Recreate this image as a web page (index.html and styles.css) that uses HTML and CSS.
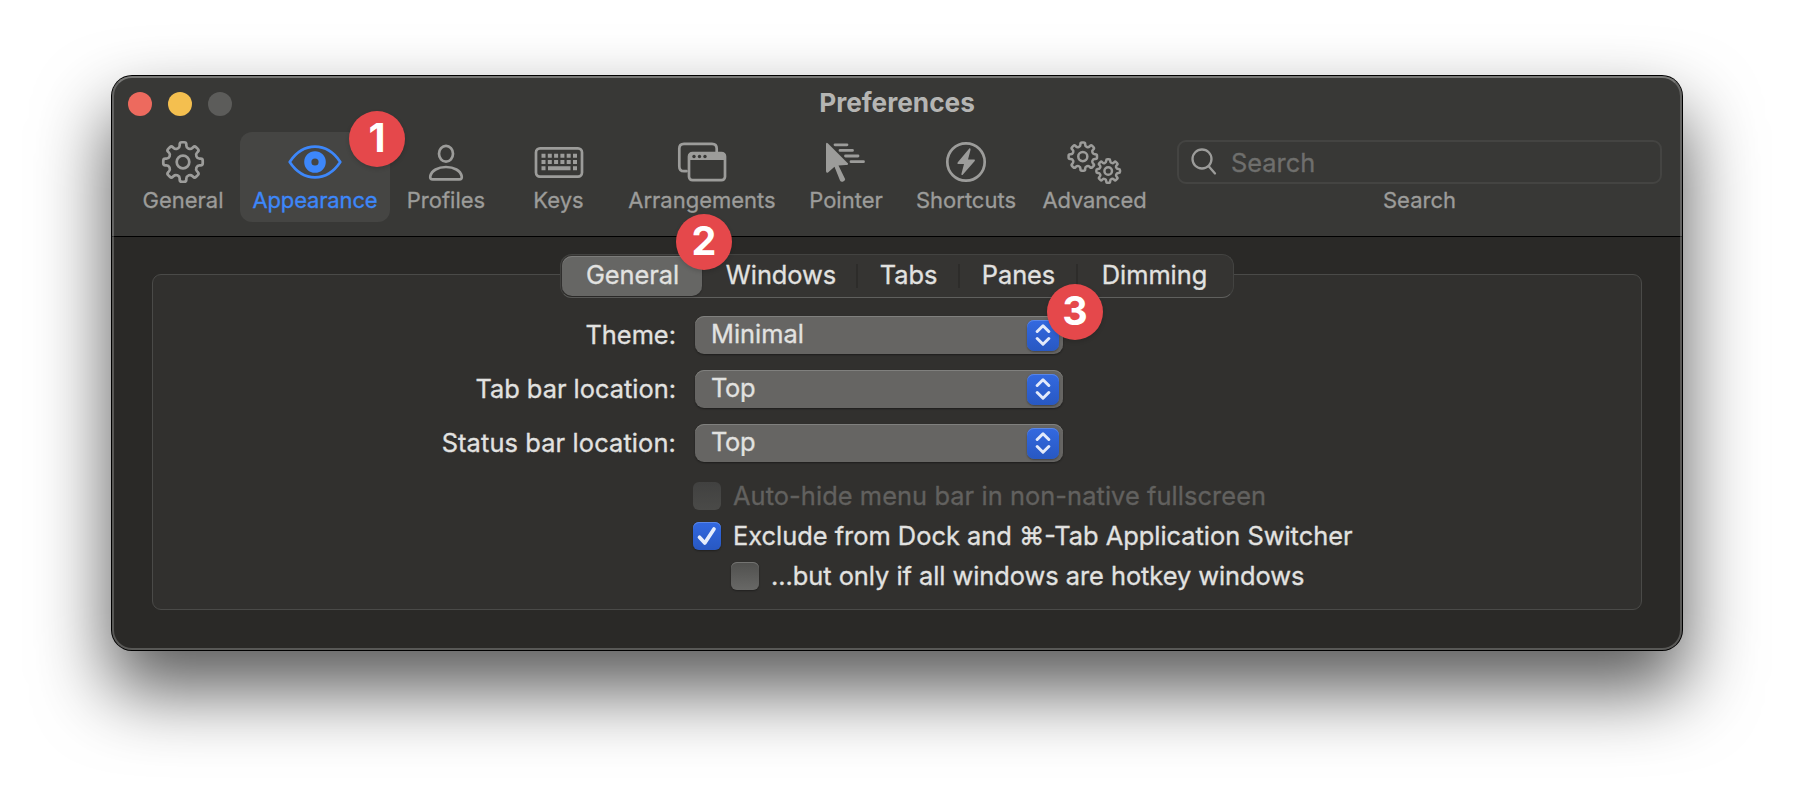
FILE: index.html
```html
<!DOCTYPE html>
<html lang="en">
<head>
<meta charset="utf-8">
<title>Preferences</title>
<link rel="stylesheet" href="styles.css">
</head>
<body>
<main class="window">
  <header class="header">
    <div class="lights"><i class="light red"></i><i class="light yellow"></i><i class="light gray"></i></div>
    <h1 class="title">Preferences</h1>
    <nav class="toolbar">
      <a class="tool w-general"><svg class="icon" width="44" height="44" viewBox="-22 -22 44 44"><use href="#gear-shape"/></svg><span>General</span></a>
      <a class="tool w-appearance active">
        <svg class="icon" width="56" height="44" viewBox="-28 -22 56 44"><path d="M-25.3 0C-19-9.500-10-15.300 0-15.300S19-9.500 25.300 0C19 9.500 10 15.300 0 15.300S-19 9.500-25.300 0Z"/><circle r="7.200" stroke-width="7.200"/></svg>
        <span class="t-appearance">Appearance</span><b class="badge b1">1</b></a>
      <a class="tool w-profiles">
        <svg class="icon" width="44" height="44" viewBox="-22 -22 44 44"><ellipse cx="0" cy="-8.300" rx="7" ry="7.900"/><path d="M-13.300 17.300H13.300Q16.200 17.300 15.700 14.300C14.500 8.500 8 5 0 5S-14.500 8.500-15.700 14.300Q-16.200 17.300-13.300 17.300Z"/></svg>
        <span>Profiles</span></a>
      <a class="tool w-keys">
        <svg class="icon" width="52" height="44" viewBox="-26 -22 52 44"><rect x="-23" y="-13.600" width="46" height="28.200" rx="4"/><path class="keys" d="M-17.500-6.300h35.500M-17.500 0h35.500"/><path class="solid" d="M-17.500 4.300h4v4h-4zM-11 4.300h22.500v4H-11zM14 4.300h4v4h-4z"/></svg>
        <span>Keys</span></a>
      <a class="tool w-arrangements">
        <svg class="icon" width="52" height="44" viewBox="-26 -22 52 44"><path d="M-15.500 9.200h-2.500q-4.700 0-4.700-4.700v-18q0-4.700 4.700-4.700h28q4.700 0 4.700 4.700v3.500"/><rect x="-13" y="-9" width="36" height="27.200" rx="3.500"/><path class="solid" d="M-13.500-2V-6q0-3.500 3.500-3.500h29.500q3.500 0 3.500 3.500v4z"/><g class="dots"><circle cx="-8" cy="-5.500" r="1.700"/><circle cx="-2.500" cy="-5.500" r="1.700"/><circle cx="3" cy="-5.500" r="1.700"/></g></svg>
        <span>Arrangements</span></a>
      <a class="tool w-pointer">
        <svg class="icon" width="44" height="44" viewBox="-22 -22 44 44"><path class="solid" d="M-20-17.500Q-20-20.500-18-18.500L2 1.500Q2.500 3-.500 3L-7.500 3.500-.800 17.200Q-1 19-3.300 19.700-5.200 20-6 18.500L-11.500 4.800-18 10.500Q-20 11.500-20 9Z"/><path class="lines" d="M-11-17.200H1M-6-11.600H6.500M-.500-6H12M5-.300H17.500"/></svg>
        <span>Pointer</span></a>
      <a class="tool w-shortcuts">
        <svg class="icon" width="44" height="44" viewBox="-22 -22 44 44"><circle r="18.700"/><path class="solid" d="M3.500-13.800Q5-14 4.500-12L2-2.500H8.500Q9.500-2 8.500-.700L-3.500 13Q-5 13.500-4.500 11.500L-2 2H-8Q-9.500 1.500-8 0Z"/></svg>
        <span>Shortcuts</span></a>
      <a class="tool w-advanced">
        <svg class="icon" width="56" height="44" viewBox="-28 -22 56 44"><g transform="translate(-12.200 -5.400) scale(.72)" class="thick1"><use href="#gear-shape"/></g><g transform="translate(13.200 9) scale(.6)" class="thick2"><use href="#gear-shape"/></g></svg>
        <span class="t-advanced">Advanced</span></a>
      <div class="search">
        <div class="field"><svg class="glass" width="26" height="28" viewBox="0 0 26 28"><circle cx="11" cy="11" r="9.500"/><path d="M17.700 18.200L24 25.500"/></svg><span>Search</span></div>
        <span>Search</span>
      </div>
    </nav>
  </header>
  <section class="content">
    <div class="panel">
      <nav class="tabs">
        <a class="seg s1 on"><span>General</span><b class="badge b2">2</b></a>
        <a class="seg s2"><span>Windows</span></a>
        <a class="seg s3"><span>Tabs</span></a>
        <a class="seg s4"><span>Panes</span></a>
        <a class="seg s5"><span>Dimming</span></a>
      </nav>
      <div class="form">
        <label class="label">Theme:</label>
        <div class="select"><span>Minimal</span><i class="step"><svg width="16" height="22" viewBox="0 0 16 22"><path d="M2.200 7.500L8 1.800 13.800 7.500M2.200 14.500L8 20.200 13.800 14.500"/></svg></i><b class="badge b3">3</b></div>
        <label class="label">Tab bar location:</label>
        <div class="select"><span class="t-top">Top</span><i class="step"><svg width="16" height="22" viewBox="0 0 16 22"><path d="M2.200 7.500L8 1.800 13.800 7.500M2.200 14.500L8 20.200 13.800 14.500"/></svg></i></div>
        <label class="label t-status">Status bar location:</label>
        <div class="select"><span class="t-top">Top</span><i class="step"><svg width="16" height="22" viewBox="0 0 16 22"><path d="M2.200 7.500L8 1.800 13.800 7.500M2.200 14.500L8 20.200 13.800 14.500"/></svg></i></div>
      </div>
      <div class="checks">
        <label class="check disabled"><i class="box"></i><span class="t-auto">Auto-hide menu bar in non-native fullscreen</span></label>
        <label class="check"><i class="box checked"><svg width="28" height="28" viewBox="0 0 28 28"><path d="M6.500 15.300L11.800 21 21 7"/></svg></i><span>Exclude from Dock and <span class="cmd">⌘</span>-Tab Application Switcher</span></label>
        <label class="check sub"><i class="box"></i><span class="t-only">...but only if all windows are hotkey windows</span></label>
      </div>
    </div>
  </section>
</main>
<svg width="0" height="0" class="defs"><defs><g id="gear-shape"><path id="teeth"/><circle r="6.300"/></g></defs></svg>
<script src="gear.js"></script>
</body>
</html>
```
FILE: gear.js
```js
// Builds the outline of the eight-toothed gear shared by the toolbar icons.
(function () {
  var pts = [], root = 14.8, tip = 20;
  for (var i = 0; i < 8; i++) {
    var c = i * 45 - 90;
    [[-13, root], [-9.5, tip], [9.5, tip], [13, root]].forEach(function (p) {
      var a = (c + p[0]) * Math.PI / 180;
      pts.push([p[1] * Math.cos(a), p[1] * Math.sin(a)]);
    });
  }
  function toward(a, b, d) {
    var l = Math.hypot(b[0] - a[0], b[1] - a[1]);
    return [(a[0] + (b[0] - a[0]) * d / l).toFixed(2), (a[1] + (b[1] - a[1]) * d / l).toFixed(2)];
  }
  var n = pts.length, d = '';
  pts.forEach(function (p, k) {
    var start = toward(p, pts[(k + n - 1) % n], 2.1), end = toward(p, pts[(k + 1) % n], 2.1);
    d += (k ? 'L' : 'M') + start + 'Q' + p[0].toFixed(2) + ',' + p[1].toFixed(2) + ' ' + end;
  });
  document.getElementById('teeth').setAttribute('d', d + 'Z');
})();
```
FILE: styles.css
```css
* { box-sizing: border-box; }
body { margin: 0; width: 1794px; height: 798px; padding: 76px 112px; overflow: hidden; background: #fff; font-family: Inter, "Liberation Sans", sans-serif; font-size: 25.400px; color: #e2e2e0; -webkit-text-stroke: .3px currentColor; }
.defs { position: absolute; }
span { white-space: nowrap; }
.window { position: relative; width: 1570px; height: 574px; border-radius: 20px; background: #2a2927; box-shadow: 0 0 0 1px #000, 0 38px 72px 3px rgba(0,0,0,.64); display: flex; flex-direction: column; }
.window::after { content: ""; position: absolute; inset: 0; border-radius: 20px; border: 2px solid rgba(255,255,255,.22); border-top-color: rgba(255,255,255,.32); pointer-events: none; }
.header { height: 161px; border-bottom: 1px solid #000; background: #383836; border-radius: 20px 20px 0 0; display: grid; grid-template-columns: 1fr auto 1fr; grid-template-rows: 56px 104px; }
.lights { display: flex; gap: 16px; padding: 16px 0 0 16px; }
.light { width: 24px; height: 24px; border-radius: 50%; }
.red { background: #ed6a5e; }
.yellow { background: #f4bf4f; }
.gray { background: #5c5c5a; }
.title { margin: 0; padding-top: 11px; font-size: 26.200px; line-height: 31px; font-weight: 700; color: #b5b5b3; -webkit-text-stroke: 0; }
.toolbar { grid-column: 1 / 4; display: flex; padding-left: 14px; height: 90px; font-size: 22px; color: #9c9c9a; }
.tool { position: relative; height: 90px; display: flex; flex-direction: column; align-items: center; padding-top: 8px; line-height: 27px; border-radius: 12px; }
.tool > span, .search > span { margin-top: 3px; }
.t-appearance, .t-advanced { letter-spacing: -.15px; }
.icon { display: block; fill: none; stroke: currentColor; stroke-width: 2.700; stroke-linejoin: round; stroke-linecap: round; flex: none; }
.icon .solid { fill: currentColor; stroke: none; }
.icon .keys { stroke-width: 4; stroke-linecap: butt; stroke-dasharray: 4 2.300; }
.icon .lines { stroke-width: 2.800; }
.icon .dots { fill: #383836; stroke: none; }
.thick1 { stroke-width: 3.500; }
.thick2 { stroke-width: 4.100; }
.w-general { width: 114px; } .w-appearance { width: 150px; } .w-profiles { width: 112px; } .w-keys { width: 113px; }
.w-arrangements { width: 174px; } .w-pointer { width: 114px; } .w-shortcuts { width: 126px; } .w-advanced { width: 131px; }
.active { background: #454543; color: #3d87fa; }
.search { width: 485px; margin-left: 17px; padding-top: 8px; display: flex; flex-direction: column; align-items: center; line-height: 27px; }
.field { width: 485px; height: 44px; border: 2px solid #444442; border-radius: 9px; display: flex; align-items: center; padding-left: 12px; gap: 14px; font-size: 25.400px; color: #6f6f6d; }
.glass { fill: none; stroke: #9c9c9a; stroke-width: 2.300; stroke-linecap: round; }
.badge { position: absolute; z-index: 3; width: 56px; height: 56px; border-radius: 50%; background: #e5484b; color: #fff; text-align: center; font: 700 39.500px/54px Inter, sans-serif; letter-spacing: 0; -webkit-text-stroke: 0; box-shadow: 0 2px 4px rgba(0,0,0,.15); }
.b1 { left: 109px; top: -21px; }
.b2 { left: 114px; top: -42px; }
.b3 { left: 352px; top: -32px; }
.content { padding: 37px 40px 0; }
.panel { height: 336px; border: 1px solid #4a4a48; border-radius: 9px; background: #31302e; }
.tabs { position: relative; width: 674px; height: 44px; margin: -21px 0 0 407px; border: 1px solid #434341; border-bottom-color: #60605e; border-radius: 12px; background: #353432; padding: 1px; display: flex; letter-spacing: -.05px; }
.seg { position: relative; height: 40px; display: flex; align-items: center; justify-content: center; line-height: 30px; padding: 0 0 3px 1px; }
.seg + .seg + .seg::before { content: ""; position: absolute; left: -1px; top: 8px; width: 2px; height: 24px; background: #2d2c2a; }
.on { border-radius: 10px; background: #666664; box-shadow: inset 0 1px 0 #7c7c7a, 0 1px 2px rgba(0,0,0,.3); }
.s1 { width: 140px; } .s2 { width: 155px; padding-left: 3px; } .s3 { width: 102px; } .s4 { width: 118px; } .s5 { width: 155px; padding-left: 0; }
.form { display: grid; grid-template-columns: 523px 368px; grid-auto-rows: 38px; gap: 16px 19px; margin-top: 18px; }
.label { text-align: right; line-height: 37px; }
.t-status { letter-spacing: .12px; }
.t-top { letter-spacing: -.3px; }
.select { position: relative; border-radius: 9px; background: #666563; box-shadow: inset 0 1px 0 #80807e, 0 1px 2px rgba(0,0,0,.4); display: flex; align-items: center; justify-content: space-between; padding: 0 4px 0 16px; line-height: 36px; }
.select > span { padding-bottom: 3px; }
.step { width: 32px; height: 31px; border-radius: 7px; background: linear-gradient(#3369e0, #2858c2); box-shadow: inset 0 1px 0 #5a86e6, 0 1px 2px rgba(0,0,0,.35); display: flex; align-items: center; justify-content: center; }
.step path { fill: none; stroke: #e3eafa; stroke-width: 3; stroke-linecap: round; stroke-linejoin: round; }
.checks { margin: 20px 0 0 540px; display: grid; gap: 12px; }
.check { display: flex; align-items: center; gap: 12px; height: 28px; line-height: 28px; }
.t-auto { letter-spacing: .07px; }
.t-only { letter-spacing: -.04px; }
.sub { margin-left: 38px; }
.box { width: 28px; height: 28px; border-radius: 6px; background: linear-gradient(#50504e, #686866); box-shadow: inset 0 1px 0 #747472, 0 1px 2px rgba(0,0,0,.35); }
.disabled { color: #62615f; }
.disabled .box { background: linear-gradient(#414140, #4a4a48); box-shadow: none; }
.box.checked { background: linear-gradient(#3268e0, #2858c2); box-shadow: inset 0 1px 0 #5a86e6, 0 1px 2px rgba(0,0,0,.35); }
.checked svg { display: block; }
.checked path { fill: none; stroke: #e6edfc; stroke-width: 3.700; stroke-linecap: round; stroke-linejoin: round; }
.cmd { font-family: Inter, "DejaVu Sans", sans-serif; }
```
